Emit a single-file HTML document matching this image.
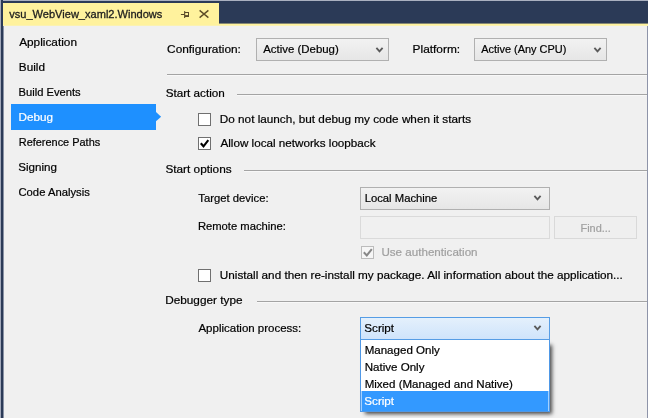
<!DOCTYPE html>
<html>
<head>
<meta charset="utf-8">
<title>vsu_WebView_xaml2.Windows</title>
<style>
html,body{margin:0;padding:0;}
body{width:648px;height:418px;overflow:hidden;background:#f0f0f0;position:relative;
  font-family:"Liberation Sans",sans-serif;font-size:11px;color:#000;-webkit-text-stroke:0.2px;}
.a{position:absolute;}
.t{position:absolute;transform-origin:0 0;white-space:nowrap;line-height:16px;height:16px;}
.navy{background:#2b3a57;}
.hl{position:absolute;height:1px;background:#a4a4a4;box-shadow:0 1px 0 rgba(255,255,255,0.55);}
.combo{position:absolute;box-sizing:border-box;border:1px solid #b0b0b0;
  background:linear-gradient(#f2f2f2,#e6e6e6);}
.cb{position:absolute;box-sizing:border-box;width:13px;height:13px;border:1px solid #707070;background:#fff;}
</style>
</head>
<body>
<div id="root" style="position:absolute;left:0;top:0;width:648px;height:418px;overflow:hidden;background:#f0f0f0;filter:blur(0.35px);">
<!-- frame -->
<div class="a navy" style="left:0;top:0;width:648px;height:24px;"></div>
<div class="a" style="left:0;top:0;width:648px;height:1px;background:#aab0c0;"></div>
<div class="a" style="left:0;top:23px;width:648px;height:1px;background:#858876;"></div>
<div class="a" style="left:0;top:24px;width:648px;height:1px;background:#fff29d;"></div>
<div class="a" style="left:0;top:25px;width:648px;height:1px;background:#fbf2b2;"></div>
<div class="a" style="left:3px;top:3px;width:216px;height:22px;background:#fff29d;"></div>
<div class="a" style="left:3px;top:25px;width:216px;height:1px;background:#fbf2b2;"></div>
<div class="a navy" style="left:0;top:0;width:3px;height:418px;"></div>
<div class="a" style="left:0;top:0;width:1px;height:418px;background:#a3a9ba;"></div>
<div class="a" style="left:3px;top:26px;width:1px;height:392px;background:#8b93a5;"></div>
<div class="a" style="left:647px;top:26px;width:1px;height:392px;background:#8e94a9;"></div>

<!-- tab -->
<div class="t" id="title" style="left:9px;top:6px;transform:translateX(0.25px) scaleX(1.0045);color:#1e1e1e;-webkit-text-stroke:0.3px;">vsu_WebView_xaml2.Windows</div>
<svg class="a" style="left:180px;top:9px;" width="12" height="11" viewBox="0 0 12 11" fill="#5a4a28">
  <rect x="0.9" y="5" width="3.6" height="1"/><rect x="4.1" y="2.1" width="1.1" height="6.9"/>
  <rect x="5" y="3" width="4" height="1"/><rect x="8" y="3" width="1" height="5"/><rect x="5" y="6.1" width="4" height="1.9"/>
</svg>
<svg class="a" style="left:198px;top:9px;" width="13" height="11" viewBox="0 0 13 11">
  <path d="M1.6 1.4L10.4 8.6M10.4 1.4L1.6 8.6" fill="none" stroke="#5f4e28" stroke-width="1.4"/>
</svg>

<!-- sidebar -->
<div class="a" style="left:11px;top:104px;width:145px;height:26px;background:#1e90ff;"></div>
<svg class="a" style="left:156px;top:110px;" width="7" height="14" viewBox="0 0 7 14"><polygon points="0,2 5.1,6.65 0,11.3" fill="#1e90ff"/></svg>
<div class="t" id="s1" style="left:19px;top:34px;transform:translateX(0.17px) scaleX(1.0738);">Application</div>
<div class="t" id="s2" style="left:18px;top:59px;transform:translateX(0.82px) scaleX(1.0680);">Build</div>
<div class="t" id="s3" style="left:18px;top:84px;transform:translateX(0.61px) scaleX(1.0152);">Build Events</div>
<div class="t" id="s4" style="left:18px;top:109px;transform:translateX(0.61px) scaleX(1.0637);color:#fff;">Debug</div>
<div class="t" id="s5" style="left:18px;top:134px;transform:translateX(0.75px) scaleX(0.9938);">Reference Paths</div>
<div class="t" id="s6" style="left:18px;top:159px;transform:translateX(0.24px) scaleX(1.0548);">Signing</div>
<div class="t" id="s7" style="left:18px;top:184px;transform:translateX(0.49px) scaleX(1.0226);">Code Analysis</div>

<!-- config row -->
<div class="t" id="c1" style="left:167px;top:41px;transform:translateX(0.10px) scaleX(1.0767);">Configuration:</div>
<div class="combo" style="left:256px;top:38px;width:133px;height:23px;"></div>
<div class="t" id="c2" style="left:263px;top:41px;transform:translateX(0.22px) scaleX(1.0381);">Active (Debug)</div>
<svg class="a chev" style="left:375px;top:46px;" width="9" height="8" viewBox="0 0 9 8"><path d="M1.4 1.8L4.5 5.3L7.6 1.8" fill="none" stroke="#5a5a5a" stroke-width="1.8"/></svg>
<div class="t" id="c3" style="left:412px;top:41px;transform:translateX(0.58px) scaleX(1.0798);">Platform:</div>
<div class="combo" style="left:474px;top:38px;width:133px;height:23px;"></div>
<div class="t" id="c4" style="left:481px;top:41px;transform:translateX(0.17px) scaleX(0.9945);">Active (Any CPU)</div>
<svg class="a chev" style="left:593px;top:46px;" width="9" height="8" viewBox="0 0 9 8"><path d="M1.4 1.8L4.5 5.3L7.6 1.8" fill="none" stroke="#5a5a5a" stroke-width="1.8"/></svg>

<div class="hl" style="left:167px;top:74px;width:480px;"></div>

<!-- start action -->
<div class="t" id="g1" style="left:165px;top:85px;transform:translateX(0.64px) scaleX(1.0626);">Start action</div>
<div class="hl" style="left:237px;top:94px;width:410px;"></div>
<div class="cb" style="left:198px;top:113px;"></div>
<div class="t" id="k1" style="left:219px;top:111px;transform:translateX(0.83px) scaleX(1.0671);">Do not launch, but debug my code when it starts</div>
<div class="cb" style="left:198px;top:137px;"></div>
<svg class="a" style="left:198px;top:137px;" width="13" height="13" viewBox="0 0 13 13"><path d="M2.8 6.2L5.5 9.3L10.3 3.2" fill="none" stroke="#000" stroke-width="2.1"/></svg>
<div class="t" id="k2" style="left:220px;top:135px;transform:translateX(0.44px) scaleX(1.0612);">Allow local networks loopback</div>

<!-- start options -->
<div class="t" id="g2" style="left:165px;top:161px;transform:translateX(0.42px) scaleX(1.0718);">Start options</div>
<div class="hl" style="left:244px;top:170px;width:403px;"></div>
<div class="t" id="o1" style="left:198px;top:190px;transform:translateX(0.32px) scaleX(1.0253);">Target device:</div>
<div class="combo" style="left:360px;top:187px;width:190px;height:23px;"></div>
<div class="t" id="o2" style="left:364px;top:190px;transform:translateX(0.68px) scaleX(1.0243);">Local Machine</div>
<svg class="a chev" style="left:533px;top:194px;" width="9" height="8" viewBox="0 0 9 8"><path d="M1.4 1.8L4.5 5.3L7.6 1.8" fill="none" stroke="#5a5a5a" stroke-width="1.8"/></svg>
<div class="t" id="o3" style="left:197px;top:217px;transform:translateY(0.5px) translateX(0.90px) scaleX(1.0213);">Remote machine:</div>
<div class="a" style="left:360px;top:216px;width:190px;height:23px;box-sizing:border-box;border:1px solid #dadada;background:#f0f0f0;"></div>
<div class="a" style="left:554px;top:216px;width:83px;height:23px;box-sizing:border-box;border:1px solid #d9d9d9;background:#efefef;"></div>
<div class="t" id="o4" style="left:580px;top:220px;transform:translateX(0.49px) scaleX(0.9935);color:#a0a0a0;">Find...</div>
<div class="cb" style="left:361px;top:246px;border-color:#bcbcbc;background:#f6f6f6;"></div>
<svg class="a" style="left:361px;top:246px;" width="13" height="13" viewBox="0 0 13 13"><path d="M2.8 6.3L5.8 9.4L10.8 3.1" fill="none" stroke="#878787" stroke-width="2"/></svg>
<div class="t" id="o5" style="left:381px;top:244px;transform:translateX(0.42px) scaleX(1.0553);color:#a0a0a0;">Use authentication</div>
<div class="cb" style="left:198px;top:269px;"></div>
<div class="t" id="o6" style="left:219px;top:267px;transform:translateX(0.87px) scaleX(1.0664);">Unistall and then re-install my package. All information about the application...</div>

<!-- debugger type -->
<div class="t" id="g3" style="left:165px;top:292px;transform:translateX(0.20px) scaleX(1.0713);">Debugger type</div>
<div class="hl" style="left:257px;top:301px;width:390px;"></div>
<div class="t" id="d1" style="left:198px;top:320px;transform:translateX(0.44px) scaleX(1.0447);">Application process:</div>

<!-- dropdown -->
<div class="a" style="left:367px;top:347px;width:182px;height:64px;box-shadow:0 0 4px 2.5px rgba(0,0,0,0.7);"></div>
<div class="a" style="left:360px;top:339px;width:190px;height:73px;box-sizing:border-box;border:1px solid #4f98e6;background:#fff;"></div>
<div class="a" style="left:362px;top:391px;width:186px;height:20px;background:#3399ff;"></div>
<div class="a" style="left:361px;top:391px;width:188px;height:20px;background:rgba(51,153,255,0.45);"></div>
<div class="combo" style="left:360px;top:317px;width:190px;height:23px;border-color:#569de5;background:linear-gradient(#e4f0fc,#cfe4fb);"></div>
<div class="t" id="d2" style="left:364px;top:320px;transform:translateX(0.29px) scaleX(1.0599);">Script</div>
<svg class="a chev" style="left:533px;top:324px;" width="9" height="8" viewBox="0 0 9 8"><path d="M1.4 1.8L4.5 5.3L7.6 1.8" fill="none" stroke="#5a5a5a" stroke-width="1.8"/></svg>
<div class="t" id="l1" style="left:364px;top:342px;transform:translateX(0.65px) scaleX(1.0501);">Managed Only</div>
<div class="t" id="l2" style="left:364px;top:359px;transform:translateX(0.65px) scaleX(1.0515);">Native Only</div>
<div class="t" id="l3" style="left:364px;top:376px;transform:translateX(0.66px) scaleX(1.0492);">Mixed (Managed and Native)</div>
<div class="t" id="l4" style="left:364px;top:393px;transform:translateX(0.29px) scaleX(1.0599);color:#fff;">Script</div>
</div>
</body>
</html>
